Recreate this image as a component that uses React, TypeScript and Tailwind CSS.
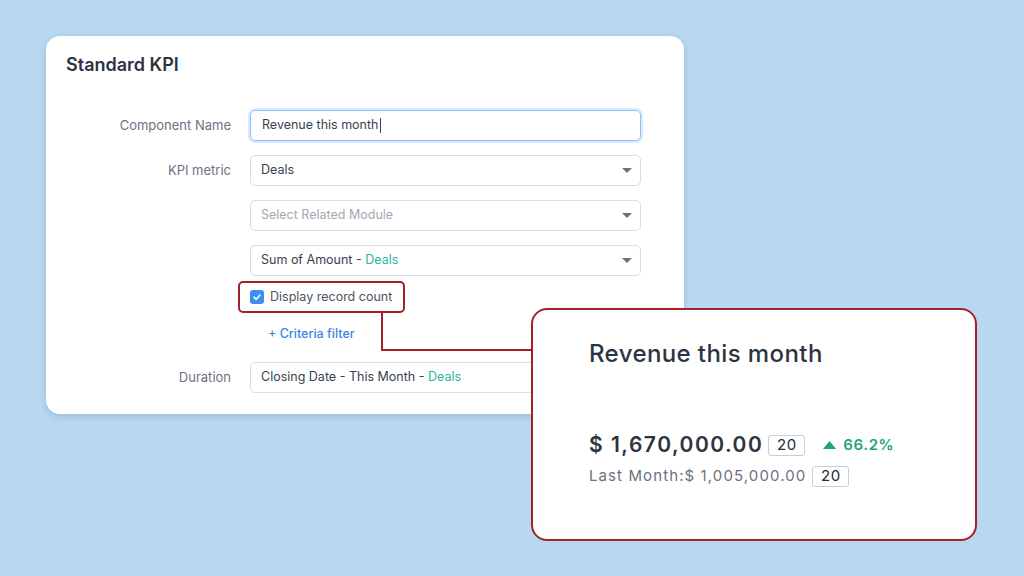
import React from 'react';

const font = { fontFamily: 'Inter, "Noto Sans", sans-serif' };

const Caret = () => (
  <svg width="10" height="6" viewBox="0 0 10 6" className="shrink-0">
    <path d="M0 0 L10 0 L5 5 Z" fill="#6b7280" />
  </svg>
);

const Row = ({ label, children }: { label?: string, children: React.ReactNode }) => (
  <div className="flex items-center">
    <div className="w-[165px] text-right text-[13px] text-[#6b7280]">{label}</div>
    <div className="ml-[19px] w-[391px]">{children}</div>
  </div>
);

const Select = ({ children }: { children: React.ReactNode }) => (
  <div className="h-[31px] flex items-center justify-between border border-[#d9dde3] rounded-[5px] pl-[10px] pr-[8px] text-[12.5px] text-[#374151]">
    <span>{children}</span>
    <Caret />
  </div>
);

const CountBadge = ({ className }: { className: string }) => (
  <span className={`inline-flex items-center justify-center w-[37px] h-[21px] border border-[#c9ced6] rounded-[3px] text-[15px] tracking-[0.5px] text-[#1f2937] ${className}`}>20</span>
);

export default function App() {
  return (
    <div className="relative w-[1024px] h-[576px] overflow-hidden bg-[#b7d8f0]" style={font}>
      {/* Form card */}
      <div className="ml-[46px] pt-[36px]">
        <div className="w-[638px] h-[378px] bg-white rounded-[14px] shadow-[0_2px_6px_rgba(30,60,90,0.18)] pl-[20px] pt-[17px]">
          <h1 className="h-6 leading-6 text-[18px] font-semibold text-[#2d3441]">Standard KPI</h1>

          <div className="mt-[33px] flex flex-col">
            <Row label="Component Name">
              <div className="h-[31px] flex items-center border border-[#8fc0f5] rounded-[5px] pl-[11px] text-[12.5px] text-[#374151] shadow-[0_0_0_2px_rgba(147,197,253,0.35)]">
                Revenue this month
                <span className="inline-block w-px h-[15px] bg-[#374151] ml-px" />
              </div>
            </Row>
            <div className="mt-[14px]">
              <Row label="KPI metric">
                <Select>Deals</Select>
              </Row>
            </div>
            <div className="mt-[14px]">
              <Row>
                <Select><span className="text-[#a3a9b3]">Select Related Module</span></Select>
              </Row>
            </div>
            <div className="mt-[14px]">
              <Row>
                <Select>Sum of Amount - <span className="text-[#2bb59e]">Deals</span></Select>
              </Row>
            </div>
            <div className="mt-[5px]">
              <Row>
                <div className="-ml-3 w-[167px] h-[32px] flex items-center border-2 border-[#a3222a] rounded-[5px] pl-[10px]">
                  <span className="w-[14px] h-[14px] rounded-[3px] bg-[#3d8ef0] flex items-center justify-center">
                    <svg width="10" height="10" viewBox="0 0 10 10">
                      <path d="M2 5.2 L4.2 7.3 L8 3" stroke="white" strokeWidth="1.6" fill="none" strokeLinecap="round" strokeLinejoin="round" />
                    </svg>
                  </span>
                  <span className="ml-[6px] text-[12.5px] text-[#4b5563]">Display record count</span>
                </div>
              </Row>
            </div>
            <div className="mt-[11px]">
              <Row>
                <div className="pl-[18px] h-5 leading-5 text-[12.5px] font-medium text-[#3b87e6]">+ Criteria filter</div>
              </Row>
            </div>
            <div className="mt-[18px]">
              <Row label="Duration">
                <Select>Closing Date - This Month - <span className="text-[#2bb59e]">Deals</span></Select>
              </Row>
            </div>
          </div>
        </div>
      </div>

      {/* Connector */}
      <div className="absolute left-[381px] top-[313px] w-[2px] h-[38px] bg-[#a3222a]" />
      <div className="absolute left-[381px] top-[349px] w-[151px] h-[2px] bg-[#a3222a]" />

      {/* Preview card */}
      <div className="absolute left-[531px] top-[308px] w-[446px] h-[233px] bg-white border-2 border-[#a3222a] rounded-[16px] pl-[56px] pt-[28px]">
        <div className="h-8 leading-8 text-[24px] font-medium text-[#2d3441] tracking-[0.4px]">Revenue this month</div>
        <div className="mt-[61px] h-7 flex items-center">
          <span className="text-[21px] font-semibold text-[#2d3441] tracking-[1.5px]">$ 1,670,000.00</span>
          <CountBadge className="ml-[5px]" />
          <svg width="13" height="8" viewBox="0 0 13 8" className="ml-[18px]">
            <path d="M0 8 L6.5 0 L13 8 Z" fill="#22a56c" />
          </svg>
          <span className="ml-[7px] text-[15px] font-semibold text-[#22a56c] tracking-[0.6px]">66.2%</span>
        </div>
        <div className="mt-[6px] h-[22px] flex items-center">
          <span className="text-[15px] text-[#6b7280] tracking-[1.1px]">Last Month:$ 1,005,000.00</span>
          <CountBadge className="ml-[6px]" />
        </div>
      </div>
    </div>
  );
}
